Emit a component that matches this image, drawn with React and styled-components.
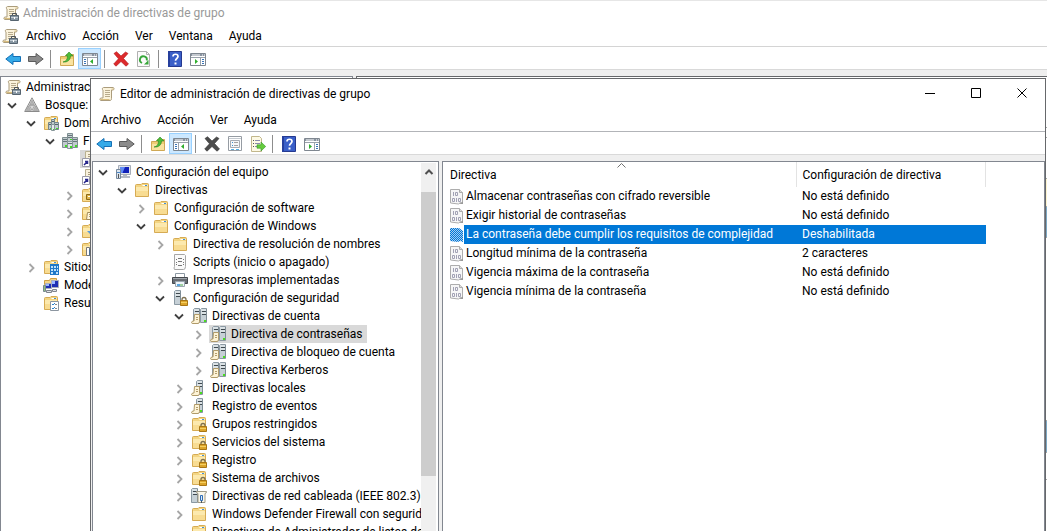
import React from "react";
import styled, { createGlobalStyle, css } from "styled-components";

const GlobalStyle = createGlobalStyle`
  *, *::before, *::after { box-sizing: border-box; }
  html, body { margin: 0; padding: 0; }
  body {
    font-family: Roboto, "Open Sans", sans-serif;
    font-size: 12px;
    line-height: 18px;
    color: #000;
    background: #efefef;
    overflow: hidden;
  }
  button { font: inherit; color: inherit; background: none; border: 0; padding: 0; margin: 0; }
`;

/* ---------- icons ---------- */

const Svg = styled.svg`
  display: block;
  flex: none;
  width: 16px;
  height: 16px;
`;

const Scroll = () => (
  <>
    <path d="M4.500 1.500h9.500c1.400 0 1.400 2.500 0 2.500h-1.500v8.500c0 1.300-.5 2-1.500 2H2c-1.500 0-1.500-2.300 0-2.500h2V4c-1-.3-1-2.200.5-2.500z" fill="#fbf3dc" stroke="#ab9c7c" />
    <path d="M1.500 13.500h9" stroke="#d8bd7e" />
    <path d="M6 4.500h5M6 6.500h5M6 8.500h5M6 10.500h5" stroke="#b7aa8c" />
    <path d="M12.500 2.500h2v1h-2z" fill="#e0c98f" />
  </>
);

const Folder = () => (
  <>
    <path d="M1.500 14.500v-11q0-1 1-1H7l1-1h5.500q1 0 1 1v12z" fill="#f3d583" stroke="#d6ab54" />
    <path d="M8.500 3.500h5" stroke="#fff" />
    <path d="M11 3.500h2" stroke="#3f8fd8" />
    <path d="M2 5h12v9H2z" fill="#fce9ae" />
    <path d="M2 9h12v5H2z" fill="#f8dc92" />
  </>
);

const Lock = () => (
  <>
    <path d="M10 11V9.500a2 2 0 0 1 4 0V11" fill="none" stroke="#7d7050" strokeWidth="1.300" />
    <path d="M8.500 10.500h7v5h-7z" fill="#dda52b" stroke="#a87615" />
    <path d="M9 12.500h6" stroke="#f5d060" />
  </>
);

const Tower = ({ x = 0 }) => (
  <g transform={`translate(${x} 0)`}>
    <path d="M.500 1.500l1-1h5v14h-6z" fill="#c6d0d6" stroke="#8b99a3" />
    <path d="M2 3.500h4M2 6.500h4" stroke="#3f494f" />
    <path d="M1 2h5M1 5h5" stroke="#eef3f4" />
    <path d="M6.500 1v13" stroke="#7e8c95" />
  </g>
);

const SmallScroll = () => (
  <>
    <path d="M3.500 6.500h5v7q0 2-1.500 2H2q-1.500 0-1.500-1t1.500-1.500h1z" fill="#fdf3d6" stroke="#b09a69" />
    <path d="M5 9.500h2M5 11.500h2" stroke="#b39d6d" />
  </>
);

const drawings = {
  gpmc: (
    <>
      <Scroll />
      <path d="M9.500 10V8.500h4V10" stroke="#4d5358" />
      <path d="M7.500 10.500h8v5h-8z" fill="#8796a2" stroke="#566470" />
      <path d="M8 12.500h7" stroke="#c2ccd4" />
      <path d="M11 12h1v2h-1z" fill="#fff" />
    </>
  ),
  scroll: <Scroll />,
  folder: <Folder />,
  folderLock: (<><Folder /><Lock /></>),
  forest: (
    <>
      <path d="M8 .8 15.300 14.500H.700z" fill="#f2f2f2" stroke="#8a8a8a" />
      <path d="M8 3l2.300 4.500H5.700zM4.500 9l2.300 4.500H2.200zM11.500 9l2.300 4.500H9.200z" fill="#b4b4b4" stroke="#8a8a8a" strokeWidth=".5" />
      <path d="M5.200 8.300h5.600L8 13.500z" fill="#d8d8d8" stroke="#777" strokeWidth=".6" />
    </>
  ),
  domain: (
    <>
      <path d="M5.500.500h5v9h-5z" fill="#c5cfd1" stroke="#7f8f92" />
      <path d="M.500 4.500h5v10h-5zM10.500 4.500h5v10h-5z" fill="#c0cacd" stroke="#7f8f92" />
      <path d="M5.500 8.500h5v7h-5z" fill="#dce4e5" stroke="#87979a" />
      <path d="M6 2.500h4M6 4.500h4M1 6.500h4M1 8.500h4M11 6.500h4M11 8.500h4M6 10.500h4" stroke="#65757a" />
      <path d="M3 12h2v2H3zM13 12h2v2h-2zM8 13h2v2H8zM8 6h2v1H8z" fill="#3fdc23" />
    </>
  ),
  domains: (
    <>
      <Folder />
      <path d="M8.500 4.500h3v5h-3zM5.500 7.500h3v7h-3zM11.500 7.500h4v7h-4z" fill="#c0cbcd" stroke="#75868b" />
      <path d="M8.500 9.500h3v6h-3z" fill="#e3eaeb" stroke="#87979a" />
      <path d="M6 9.500h2M12 9.500h3M9 6.500h2" stroke="#55656a" />
      <path d="M7 13h1v1H7zM13 13h2v1h-2zM10 14h1v1h-1z" fill="#3fdc23" />
    </>
  ),
  link: (
    <>
      <path d="M4.500.500h11v12h-11z" fill="#f8f1dc" stroke="#b8b090" />
      <path d="M7 3.500h7M7 5.500h7" stroke="#a89c80" />
      <path d="M1.500 7.500h7v8h-7z" fill="#fff" stroke="#9a9aa8" />
      <path d="M3 14l3-3M4 10.500h2.500V13" stroke="#26268c" strokeWidth="1.500" />
    </>
  ),
  ou: (<><Folder /><path d="M5.500 7.500h8v5h-8z" fill="#dfb64a" stroke="#8d6a17" /><path d="M7 9.500h5" stroke="#fff" /></>),
  folderDoc: (<><Folder /><path d="M6.500 7.500h7v7h-8z" fill="#fff6de" stroke="#a48d5c" /><path d="M8 9.500h4M8 11.500h4" stroke="#b39d6d" /></>),
  folderFilter: (<><Folder /><path d="M6 8h9l-3 4v3h-2v-3z" fill="#5a9bd8" /></>),
  folderStarter: (<><Folder /><path d="M5.500 6.500h3v8h-3z" fill="#fff" stroke="#777" /><path d="M8.500 8.500h5v6h-5z" fill="#8fb4d6" stroke="#4d6f93" /></>),
  sites: (
    <>
      <Folder />
      <path d="M7 5h9v11H7z" fill="#1f78c8" />
      <path d="M8 7h2v2H8zM11 7h2v2h-2zM14 7h1v2h-1zM8 10h2v2H8zM11 10h2v2h-2zM14 10h1v2h-1zM8 13h2v2H8zM13 13h2v2h-2z" fill="#bfe2fa" />
    </>
  ),
  modeling: (
    <>
      <path d="M1.500 3.500h5l1-2h6v6h-12z" fill="#f5d687" stroke="#cf9f42" />
      <path d="M2.500 6.500h6v5h-6zM8.500 3.500h7v7h-7z" fill="#1e2fb4" stroke="#a9aebb" />
      <path d="M3.500 13.500h5v2h-5zM9.500 12.500h4v2h-4z" fill="#dfe2e6" stroke="#80858d" />
      <path d="M3 7h3v2H3zM9 4h3v3H9z" fill="#9ab6ff" />
      <path d="M.500 8.500h2v6h-2z" fill="#8fc47a" stroke="#77868f" />
    </>
  ),
  results: (
    <>
      <Folder />
      <path d="M7.500 6.500h8v9h-8z" fill="#fff" stroke="#8c96a0" />
      <path d="M9 9l1 1 2-2M9 13l1 1 2-2" stroke="#2a83cf" />
      <path d="M12 9.500h2M12 13.500h2" stroke="#888" />
    </>
  ),
  computer: (
    <>
      <path d="M3.500 1.500h12v9h-12z" fill="#dfe3e9" stroke="#a6adb8" />
      <path d="M5 3h9v6H5z" fill="#1020b8" />
      <path d="M5 3h5L7.500 9H5z" fill="#5f8af5" />
      <path d="M8 11h4v1H8zM6 12h9v2H6z" fill="#b4bac4" />
      <path d="M1.500 5.500h4v9h-4z" fill="#dbe4ee" stroke="#75889d" />
      <path d="M2 8.500h3" stroke="#4a86c4" />
      <path d="M3 10h1v4H3z" fill="#555" />
    </>
  ),
  script: (
    <>
      <path d="M2.500.500h10l1 1v11q0 3-2 3h-9q-1-1.500 0-3z" fill="#fafafa" stroke="#a6a6a6" />
      <path d="M6 4.500h4M6 7.500h4M6 11.500h4" stroke="#777" />
      <path d="M4 5.500h1M11 5.500h1M4 8.500h1M11 8.500h1M4 10.500h1M11 10.500h1" stroke="#777" />
    </>
  ),
  printer: (
    <>
      <path d="M3.500 1.500h9v5h-9z" fill="#fff" stroke="#8d99a3" />
      <path d="M.500 5.500h15v6H.500z" fill="#686d73" stroke="#45494e" />
      <path d="M1 6.500h14" stroke="#a0a6ac" />
      <path d="M3.500 9.500h9v5h-9z" fill="#eef4f9" stroke="#9ba7b1" />
      <path d="M5 12h3v2H5z" fill="#59a6df" />
      <path d="M8 12h3v2H8z" fill="#9fd0a0" />
    </>
  ),
  security: (<><Tower x={2} /><Lock /></>),
  account: (
    <>
      <Tower x={2} />
      <Tower x={9} />
      <path d="M13 12h2v2h-2z" fill="#48e01e" />
      <SmallScroll />
    </>
  ),
  local: (
    <>
      <Tower x={5} />
      <path d="M9 12h2v2H9z" fill="#48e01e" />
      <SmallScroll />
    </>
  ),
  wired: (
    <>
      <Tower />
      <path d="M5.500 3.500h10q0 2-1.500 2v9h-7V5.500q-1.500 0-1.500-2z" fill="#fbf7ea" stroke="#a09a86" />
      <path d="M9.500 7.500h2v5h-2z" fill="#dbe9f8" stroke="#2f6cb4" />
      <path d="M10 13h1v2h-1z" fill="#4a5560" />
    </>
  ),
  policy: (
    <g transform="translate(1 0)">
      <path d="M1.500.500h9l3 3v11l-2-1-2 1.500-8-1z" fill="#f6f6f6" stroke="#adadad" />
      <path d="M10.500.500v3h3" fill="#ddd" stroke="#adadad" />
      <path d="M10 15l4-2.500V15z" fill="#999" />
      <path d="M4.500 3v4M6.500 3.500h2v3h-2zM3.500 9.500h2v3h-2zM7.500 9v4M9.500 9.500h2v3h-2z" stroke="#a2a2b4" />
    </g>
  ),
  back: (<path d="M8 2.500v3h7.500v5H8v3L.800 8z" fill="#35aae8" stroke="#1670b5" strokeLinejoin="round" />),
  forward: (<path d="M8 2.500v3H.500v5H8v3L15.200 8z" fill="#8b8b8b" stroke="#5c5c5c" strokeLinejoin="round" />),
  up: (
    <>
      <path d="M1.500 14.500v-9h5l1-2h7v11z" fill="#f0cd74" stroke="#cfa854" />
      <path d="M2 8h12v6H2z" fill="#fae3a0" />
      <path d="M4 11c3-.5 4.500-2.500 4.500-6H6.500L10 1l4 4h-2.500c0 4-3 6.500-7.500 6z" fill="#4ebd38" stroke="#288421" strokeWidth=".6" />
    </>
  ),
  paneLeft: (
    <>
      <path d="M.500 2.500h15v12H.500z" fill="#fff" stroke="#7f8790" />
      <path d="M1 3h14v2H1z" fill="#8993a0" />
      <path d="M2 4h8M12 4h1M14 4h1" stroke="#fff" />
      <path d="M5.500 7v7M1 6.500h14" stroke="#9aa2ab" />
      <path d="M2 8.500h2M2 10.500h2M2 12.500h2" stroke="#3a75b8" />
      <path d="M11 8v5l-3-2.500z" fill="#2fae2c" />
    </>
  ),
  paneRight: (
    <>
      <path d="M.500 2.500h15v12H.500z" fill="#fff" stroke="#7f8790" />
      <path d="M1 3h14v2H1z" fill="#8993a0" />
      <path d="M2 4h8M12 4h1M14 4h1" stroke="#fff" />
      <path d="M10.500 7v7M1 6.500h14" stroke="#9aa2ab" />
      <path d="M12 8.500h2M12 10.500h2M12 12.500h2" stroke="#3a75b8" />
      <path d="M5 8v5l3-2.500z" fill="#2fae2c" />
    </>
  ),
  deleteRed: (<path d="M1 2.500 3.500.700 8 5l4.500-4L15 2.500 10.500 7.500 15.500 13 13 15.200 8 10.500 3 15.200.700 13 5.500 7.800z" fill="#dd2a2c" stroke="#b01618" strokeWidth=".6" />),
  deleteGrey: (<path d="M1 2.500 3.500.700 8 5l4.500-4L15 2.500 10.500 7.500 15.500 13 13 15.200 8 10.500 3 15.200.700 13 5.500 7.800z" fill="#4c4c4c" stroke="#333" strokeWidth=".6" />),
  refresh: (
    <>
      <path d="M1.500.500h9l3 3v12h-12z" fill="#fbfbfb" stroke="#b0b0b0" />
      <path d="M10.500.500v3h3" stroke="#b0b0b0" />
      <path d="M6 12A3.500 3.500 0 1 1 10.800 9.500" stroke="#37a63a" strokeWidth="1.800" />
      <path d="M12.500 9v4.500H8z" fill="#37a63a" />
    </>
  ),
  properties: (
    <>
      <path d="M1.500.500h13v14h-13z" fill="#fff" stroke="#969ca3" />
      <path d="M2 2.500h12" stroke="#c4c9cf" />
      <path d="M3.500 4.500h9v7h-9z" fill="#f4f6f8" stroke="#a4abb3" />
      <path d="M5 6.500h1M5 9.500h1" stroke="#3a8fd0" />
      <path d="M7 6.500h4M7 9.500h4" stroke="#a2a2a2" />
      <path d="M4 13.500h3M9 13.500h3" stroke="#55aee2" />
    </>
  ),
  exportList: (
    <>
      <path d="M1.500.500h8l2 2v13h-10z" fill="#fdf9e4" stroke="#c2b78c" />
      <path d="M3 4.500h1M3 7.500h1M3 10.500h1" stroke="#555" />
      <path d="M5 4.500h5M5 7.500h5M5 10.500h3" stroke="#8b8bab" />
      <path d="M7 8.800h4V6l4.700 4.500-4.700 4.500v-2.800H7z" fill="#66cc3d" stroke="#36962a" strokeWidth=".6" />
    </>
  ),
  help: (
    <>
      <path d="M1.500.500h13v15h-13z" fill="#3a5fc8" stroke="#25398f" />
      <path d="M1 0h2v16H1z" fill="#263f9d" />
      <path d="M6 5.500c0-3 5-3 5 0 0 2-2.500 2-2.500 4.200" stroke="#fff" strokeWidth="1.700" />
      <path d="M7.500 11.500h2v2h-2z" fill="#fff" />
    </>
  ),
};

const Icon = ({ name }) => (
  <Svg viewBox="0 0 16 16" aria-hidden="true" fill="none">{drawings[name]}</Svg>
);

/* ---------- window chrome ---------- */

const Desktop = styled.main`
  height: 100vh;
  overflow: hidden;
`;

const Window = styled.section`
  display: flex;
  flex-direction: column;
  height: 100%;
  background: #efefef;
`;

const BackWindow = styled(Window)`
  border-top: 1px solid #e6e6e6;
`;

const EditorWindow = styled(Window)`
  position: absolute;
  inset: 78px 1px 0 90px;
  height: auto;
  border: 1px solid #66686b;
  border-bottom: 0;
`;

const TitleBar = styled.header`
  display: flex;
  align-items: center;
  flex: none;
  gap: ${(p) => (p.$active ? 5 : 4)}px;
  height: ${(p) => (p.$active ? 30 : 24)}px;
  padding-left: ${(p) => (p.$active ? 8 : 3)}px;
  background: #fff;
  color: ${(p) => (p.$active ? "#000" : "#999")};
`;

const Title = styled.h1`
  flex: 1;
  margin: 0;
  font-size: 12px;
  font-weight: 400;
  white-space: nowrap;
`;

const Captions = styled.div`
  display: flex;
`;

const Caption = styled.button`
  display: flex;
  align-items: flex-start;
  justify-content: center;
  width: 46px;
  height: 30px;
  padding-top: 9px;
`;

const CaptionSvg = styled.svg`
  display: block;
  width: 11px;
  height: 11px;
`;

const MenuBar = styled.nav`
  display: flex;
  align-items: center;
  flex: none;
  height: ${(p) => (p.$tall ? 23 : 22)}px;
  padding-left: 2px;
  background: #fff;
  border-bottom: 1px solid ${(p) => (p.$tall ? "#b2b4b8" : "#d4d4d4")};
`;

const MenuItem = styled.button`
  padding: 0 8px;
`;

const ToolBar = styled.div`
  display: flex;
  align-items: flex-end;
  flex: none;
  height: 23px;
  padding-left: 1px;
  background: #fff;
  border-bottom: 1px solid #d9d9d9;
`;

const ToolButton = styled.button`
  display: flex;
  align-items: center;
  justify-content: center;
  width: 23px;
  height: 21px;
  ${(p) => p.$on && css`
    background: #cce8ff;
    border: 1px solid #99d1ff;
  `}
`;

const Divider = styled.span`
  width: 1px;
  height: 18px;
  margin: 0 4px 1px 3px;
  background: #8d8d8d;
`;

/* ---------- panes ---------- */

const Panes = styled.div`
  display: grid;
  grid-template-columns: ${(p) => (p.$editor ? "347px" : "353px")} minmax(0, 1fr);
  gap: 3px;
  flex: 1;
  min-height: 0;
  margin-top: 6px;
  padding-left: ${(p) => (p.$editor ? 1 : 0)}px;
`;

const Pane = styled.div`
  display: flex;
  min-width: 0;
  overflow: hidden;
  background: #fff;
  border: 1px solid #828790;
  border-bottom: 0;
`;

const TreeList = styled.ul`
  flex: 1;
  min-width: 0;
  overflow: hidden;
  margin: 0;
  padding: 1px 0 0 ${(p) => p.$inset}px;
  list-style: none;
`;

const TreeRow = styled.li`
  display: flex;
  align-items: center;
  height: 18px;
  padding-left: ${(p) => p.$level * 19}px;
  white-space: nowrap;
`;

const toggleBox = css`
  display: flex;
  flex: none;
  align-items: center;
  justify-content: center;
  width: 16px;
  height: 18px;
  margin-right: 3px;
`;

const Toggle = styled.button`${toggleBox}`;
const ToggleSpace = styled.span`${toggleBox}`;

const TreeItem = styled.span`
  display: flex;
  flex: none;
  align-items: center;
  gap: 5px;
  height: 18px;
  padding: 0 4px 0 1px;
  background: ${(p) => (p.$selected ? "#d9d9d9" : "transparent")};
`;

const Chevron = ({ open }) => (
  <Svg viewBox="0 0 16 16" fill="none" aria-hidden="true">
    {open
      ? <path d="M4 6.500 8 10.500 12 6.500" stroke="#404040" strokeWidth="1.800" />
      : <path d="M6.500 5 10.500 9 6.500 13" stroke="#a6a6a6" strokeWidth="1.800" />}
  </Svg>
);

const ScrollBar = styled.div`
  display: flex;
  flex-direction: column;
  flex: none;
  width: 15px;
  margin: 1px 2px 0 0;
  background: #f0f0f0;
`;

const ScrollArrow = styled.button`
  display: flex;
  justify-content: center;
  padding-top: 1px;
  height: 29px;
`;

const ScrollThumb = styled.div`
  height: 284px;
  background: #cdcdcd;
`;

const ListPane = styled(Pane)`
  display: block;
`;

const Table = styled.table`
  width: 543px;
  border-collapse: collapse;
  table-layout: fixed;
`;

const HeadCell = styled.th`
  height: 25px;
  padding: 1px 0 0 ${(p) => (p.$first ? 7 : 6)}px;
  text-align: left;
  font-weight: 400;
  width: ${(p) => (p.$first ? "353px" : "auto")};
  border-right: 1px solid #e3e3e3;
`;

const HeadContent = styled.span`
  display: flex;
  align-items: center;
  position: relative;
`;

const SortMark = styled.svg`
  position: absolute;
  top: -3px;
  left: calc(50% - 6px);
  width: 9px;
  height: 5px;
`;

const Cell = styled.td`
  height: 19px;
  padding: 0 0 0 6px;
  line-height: 19px;
  white-space: nowrap;
  color: ${(p) => (p.$selected ? "#fff" : "#000")};
  background: ${(p) => (p.$selected ? "#0078d7" : "transparent")};
`;

const NameCell = styled.td`
  height: 19px;
  padding: 0 0 0 5px;
  line-height: 19px;
  white-space: nowrap;
  color: ${(p) => (p.$selected ? "#fff" : "#000")};
`;

const NameContent = styled.span`
  display: flex;
  align-items: center;
  height: 19px;
`;

const PolicyName = styled.span`
  flex: 1;
  height: 19px;
  padding-left: 2px;
  background: ${(p) => (p.$selected ? "#0078d7" : "transparent")};
`;

const BackDetails = styled(Pane)`
  flex-direction: column;
  border-color: #66686b;
  border-right: 0;
`;

const Band = styled.div`
  flex: none;
  height: ${(p) => p.$h}px;
  background: ${(p) => p.$c};
  border-bottom: 1px solid #a5a5a5;
`;

/* ---------- data ---------- */

const backTree = [
  { root: true, icon: "gpmc", text: "Administración de directivas de grupo" },
  { level: 0, open: true, icon: "forest", text: "Bosque:" },
  { level: 1, open: true, icon: "domains", text: "Dominios" },
  { level: 2, open: true, icon: "domain", text: "FP" },
  { level: 3, icon: "link", text: "", selected: true },
  { level: 3, icon: "link", text: "" },
  { level: 3, open: false, icon: "ou", text: "" },
  { level: 3, open: false, icon: "folderDoc", text: "" },
  { level: 3, open: false, icon: "folderFilter", text: "" },
  { level: 3, open: false, icon: "folderStarter", text: "" },
  { level: 1, open: false, icon: "sites", text: "Sitios" },
  { level: 1, icon: "modeling", text: "Modelado de directivas de grupo" },
  { level: 1, icon: "results", text: "Resultados de directivas de grupo" },
];

const editorTree = [
  { level: 0, open: true, icon: "computer", text: "Configuración del equipo" },
  { level: 1, open: true, icon: "folder", text: "Directivas" },
  { level: 2, open: false, icon: "folder", text: "Configuración de software" },
  { level: 2, open: true, icon: "folder", text: "Configuración de Windows" },
  { level: 3, open: false, icon: "folder", text: "Directiva de resolución de nombres" },
  { level: 3, icon: "script", text: "Scripts (inicio o apagado)" },
  { level: 3, open: false, icon: "printer", text: "Impresoras implementadas" },
  { level: 3, open: true, icon: "security", text: "Configuración de seguridad" },
  { level: 4, open: true, icon: "account", text: "Directivas de cuenta" },
  { level: 5, open: false, icon: "account", text: "Directiva de contraseñas", selected: true },
  { level: 5, open: false, icon: "account", text: "Directiva de bloqueo de cuenta" },
  { level: 5, open: false, icon: "account", text: "Directiva Kerberos" },
  { level: 4, open: false, icon: "local", text: "Directivas locales" },
  { level: 4, open: false, icon: "local", text: "Registro de eventos" },
  { level: 4, open: false, icon: "folderLock", text: "Grupos restringidos" },
  { level: 4, open: false, icon: "folderLock", text: "Servicios del sistema" },
  { level: 4, open: false, icon: "folderLock", text: "Registro" },
  { level: 4, open: false, icon: "folderLock", text: "Sistema de archivos" },
  { level: 4, open: false, icon: "wired", text: "Directivas de red cableada (IEEE 802.3)" },
  { level: 4, open: false, icon: "folder", text: "Windows Defender Firewall con seguridad avanzada" },
  { level: 4, icon: "folder", text: "Directivas de Administrador de listas de redes" },
];

const policies = [
  ["Almacenar contraseñas con cifrado reversible", "No está definido"],
  ["Exigir historial de contraseñas", "No está definido"],
  ["La contraseña debe cumplir los requisitos de complejidad", "Deshabilitada"],
  ["Longitud mínima de la contraseña", "2 caracteres"],
  ["Vigencia máxima de la contraseña", "No está definido"],
  ["Vigencia mínima de la contraseña", "No está definido"],
];

const backTools = [
  ["back", "Atrás"], ["forward", "Adelante"], null,
  ["up", "Subir un nivel"], ["paneLeft", "Mostrar árbol", true], null,
  ["deleteRed", "Eliminar"], ["refresh", "Actualizar"], null,
  ["help", "Ayuda"], ["paneRight", "Panel de acciones"],
];

const editorTools = [
  ["back", "Atrás"], ["forward", "Adelante"], null,
  ["up", "Subir un nivel"], ["paneLeft", "Mostrar árbol", true], null,
  ["deleteGrey", "Eliminar"], ["properties", "Propiedades"], ["exportList", "Exportar lista"], null,
  ["help", "Ayuda"], ["paneRight", "Panel de acciones"],
];

const Tools = ({ items }) => (
  <ToolBar role="toolbar">
    {items.map((t, i) => t
      ? <ToolButton key={i} type="button" aria-label={t[1]} $on={t[2]}><Icon name={t[0]} /></ToolButton>
      : <Divider key={i} />)}
  </ToolBar>
);

const Menus = ({ items }) => items.map((m) => <MenuItem key={m} type="button">{m}</MenuItem>);

const Tree = ({ nodes, inset }) => (
  <TreeList role="tree" $inset={inset}>
    {nodes.map((n, i) => (
      <TreeRow key={i} role="treeitem" $level={n.level || 0}>
        {!n.root && (n.open === undefined
          ? <ToggleSpace />
          : <Toggle type="button" aria-label={n.open ? "Contraer" : "Expandir"}><Chevron open={n.open} /></Toggle>)}
        <TreeItem $selected={n.selected}><Icon name={n.icon} />{n.text}</TreeItem>
      </TreeRow>
    ))}
  </TreeList>
);

const SelectedPolicyIcon = () => (
  <Svg viewBox="0 0 16 16" aria-hidden="true">
    <defs>
      <pattern id="dither" width="2" height="2" patternUnits="userSpaceOnUse">
        <path d="M0 0h2v2H0z" fill="#a9cdf0" />
        <path d="M0 0h1v1H0zM1 1h1v1H1z" fill="#0078d7" />
      </pattern>
    </defs>
    <path d="M2 1h9l4 3v11l-3-1-2 1-8-1z" fill="url(#dither)" />
  </Svg>
);

const CaptionButtons = () => (
  <Captions>
    <Caption type="button" aria-label="Minimizar">
      <CaptionSvg viewBox="0 0 11 11"><path d="M0 5.500h10" stroke="#000" /></CaptionSvg>
    </Caption>
    <Caption type="button" aria-label="Maximizar">
      <CaptionSvg viewBox="0 0 11 11" fill="none"><path d="M.500.500h9v9h-9z" stroke="#000" /></CaptionSvg>
    </Caption>
    <Caption type="button" aria-label="Cerrar">
      <CaptionSvg viewBox="0 0 11 11"><path d="M.500.500l9 9M9.500.500l-9 9" stroke="#000" /></CaptionSvg>
    </Caption>
  </Captions>
);

export default function App() {
  return (
    <Desktop>
      <GlobalStyle />
      <BackWindow>
        <TitleBar>
          <Icon name="gpmc" />
          <Title>Administración de directivas de grupo</Title>
        </TitleBar>
        <MenuBar>
          <Icon name="gpmc" />
          <Menus items={["Archivo", "Acción", "Ver", "Ventana", "Ayuda"]} />
        </MenuBar>
        <Tools items={backTools} />
        <Panes>
          <Pane><Tree nodes={backTree} inset={3} /></Pane>
          <BackDetails>
            <Band $h={51} $c="#fff" />
            <Band $h={10} $c="#fff" />
            <Band $h={41} $c="#fff" />
            <Band $h={28} $c="#fdf4cf" />
            <Band $h={31} $c="#7ba7c4" />
            <Band $h={183} $c="#fff" />
            <Band $h={32} $c="#7ba7c4" />
            <Band $h={27} $c="#fff" />
          </BackDetails>
        </Panes>
      </BackWindow>

      <EditorWindow>
        <TitleBar $active>
          <Icon name="scroll" />
          <Title as="h2">Editor de administración de directivas de grupo</Title>
          <CaptionButtons />
        </TitleBar>
        <MenuBar $tall>
          <Menus items={["Archivo", "Acción", "Ver", "Ayuda"]} />
        </MenuBar>
        <Tools items={editorTools} />
        <Panes $editor>
          <Pane>
            <Tree nodes={editorTree} inset={2} />
            <ScrollBar>
              <ScrollArrow type="button" aria-label="Desplazar hacia arriba">
                <Svg viewBox="0 0 16 16" fill="none"><path d="M4.500 10 8 6.500 11.500 10" stroke="#505050" strokeWidth="2" /></Svg>
              </ScrollArrow>
              <ScrollThumb />
            </ScrollBar>
          </Pane>
          <ListPane>
            <Table>
              <thead>
                <tr>
                  <HeadCell $first>
                    <HeadContent>
                      Directiva
                      <SortMark viewBox="0 0 9 5" fill="none"><path d="M.500 4.500l4-4 4 4" stroke="#707070" /></SortMark>
                    </HeadContent>
                  </HeadCell>
                  <HeadCell>Configuración de directiva</HeadCell>
                </tr>
              </thead>
              <tbody>
                {policies.map(([name, value], i) => {
                  const selected = i === 2;
                  return (
                    <tr key={name}>
                      <NameCell $selected={selected}>
                        <NameContent>
                          {selected ? <SelectedPolicyIcon /> : <Icon name="policy" />}
                          <PolicyName $selected={selected}>{name}</PolicyName>
                        </NameContent>
                      </NameCell>
                      <Cell $selected={selected}>{value}</Cell>
                    </tr>
                  );
                })}
              </tbody>
            </Table>
          </ListPane>
        </Panes>
      </EditorWindow>
    </Desktop>
  );
}
